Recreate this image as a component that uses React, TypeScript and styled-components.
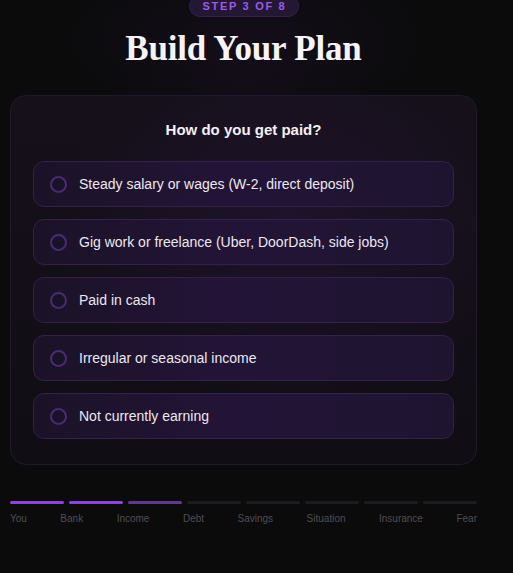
import React from "react";
import styled, { createGlobalStyle } from "styled-components";

const Global = createGlobalStyle`
  html, body { margin: 0; padding: 0; background: #0b0b0c; }
  body {
    font-family: "Liberation Sans", Arial, sans-serif;
    color: #f2eef6;
    -webkit-font-smoothing: antialiased;
  }
`;

const Page = styled.div`
  min-height: 573px;
  width: 513px;
  box-sizing: border-box;
  padding: 0 36px 0 10px;
  overflow: hidden;
  background:
    radial-gradient(ellipse 300px 260px at 245px 230px, rgba(70, 28, 110, 0.22), transparent 70%),
    radial-gradient(ellipse 260px 120px at 245px 40px, rgba(60, 24, 90, 0.18), transparent 70%),
    #0b0b0c;
`;

const Column = styled.div`
  width: 467px;
  display: flex;
  flex-direction: column;
  align-items: center;
`;

const StepPill = styled.div`
  margin-top: -5px;
  height: 22px;
  width: 110px;
  box-sizing: border-box;
  display: flex;
  align-items: center;
  justify-content: center;
  white-space: nowrap;
  border-radius: 11px;
  background: #231733;
  border: 1px solid #33214a;
  color: #9a5ce8;
  font-size: 11px;
  font-weight: 700;
  letter-spacing: 1.7px;
  padding-left: 2px;
`;

const Title = styled.h1`
  margin: 12px 0 0;
  font-family: "Liberation Serif", "DejaVu Serif", serif;
  font-weight: 700;
  font-size: 35px;
  line-height: 40px;
  color: #f7f3f7;
  letter-spacing: -0.2px;
`;

const Card = styled.div`
  margin-top: 26px;
  width: 100%;
  box-sizing: border-box;
  border-radius: 16px;
  border: 1px solid #221a2c;
  background:
    radial-gradient(ellipse 320px 240px at 60% 35%, rgba(72, 30, 112, 0.22), transparent 75%),
    linear-gradient(180deg, #151019 0%, #110d15 100%);
  padding: 24px 22px 25px;
  display: flex;
  flex-direction: column;
`;

const Question = styled.h2`
  margin: 0 0 21px;
  text-align: center;
  font-size: 15px;
  line-height: 20px;
  font-weight: 700;
  color: #f4f0f6;
`;

const Options = styled.div`
  display: flex;
  flex-direction: column;
  gap: 12px;
`;

const Option = styled.button`
  all: unset;
  box-sizing: border-box;
  height: 46px;
  border-radius: 11px;
  border: 1px solid #32214a;
  background: linear-gradient(90deg, #1b1227 0%, #231437 45%, #1e1430 100%);
  display: flex;
  align-items: center;
  gap: 12px;
  padding-left: 16px;
  cursor: pointer;
  font-family: "Liberation Sans", Arial, sans-serif;
  font-size: 14px;
  color: #ece7f1;
`;

const Radio = styled.span`
  width: 17px;
  height: 17px;
  border-radius: 50%;
  box-sizing: border-box;
  border: 2px solid #4a2b74;
  background: #1a1228;
  flex: none;
`;

const Progress = styled.div`
  margin-top: 36px;
  width: 100%;
  display: flex;
  flex-direction: column;
  gap: 8px;
`;

const Bars = styled.div`
  display: flex;
  gap: 5px;
`;

const Bar = styled.div<{ $state: "done" | "current" | "todo" }>`
  flex: 1;
  height: 3px;
  border-radius: 2px;
  background: ${(p) =>
    p.$state === "done" ? "#8a44dc" : p.$state === "current" ? "#5e3a8e" : "#1c1b1f"};
`;

const Labels = styled.div`
  display: flex;
  justify-content: space-between;
  font-size: 10px;
  line-height: 14px;
  color: #4f4d54;
`;

const options = [
  "Steady salary or wages (W-2, direct deposit)",
  "Gig work or freelance (Uber, DoorDash, side jobs)",
  "Paid in cash",
  "Irregular or seasonal income",
  "Not currently earning",
];

const steps = ["You", "Bank", "Income", "Debt", "Savings", "Situation", "Insurance", "Fear"];

export default function App() {
  return (
    <>
      <Global />
      <Page>
        <Column>
          <StepPill>STEP 3 OF 8</StepPill>
          <Title>Build Your Plan</Title>
          <Card>
            <Question>How do you get paid?</Question>
            <Options>
              {options.map((o) => (
                <Option key={o}>
                  <Radio />
                  {o}
                </Option>
              ))}
            </Options>
          </Card>
          <Progress>
            <Bars>
              {steps.map((s, i) => (
                <Bar key={s} $state={i < 2 ? "done" : i === 2 ? "current" : "todo"} />
              ))}
            </Bars>
            <Labels>
              {steps.map((s) => (
                <span key={s}>{s}</span>
              ))}
            </Labels>
          </Progress>
        </Column>
      </Page>
    </>
  );
}
